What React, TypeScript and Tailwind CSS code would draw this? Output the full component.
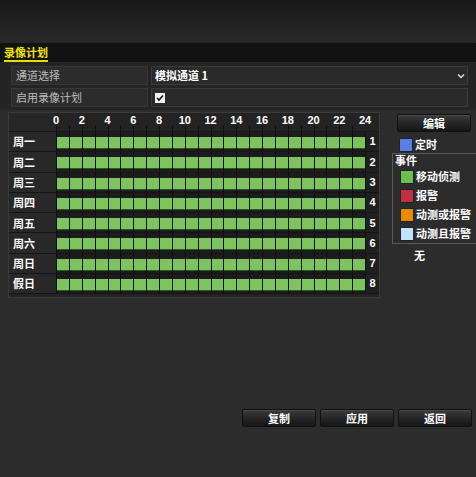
import React from "react";

const days = ["周一", "周二", "周三", "周四", "周五", "周六", "周日", "假日"];
const ticks = [0, 2, 4, 6, 8, 10, 12, 14, 16, 18, 20, 22, 24];
const hours = Array.from({ length: 24 }, (_, i) => i);

const font = { fontFamily: '"Noto Sans CJK SC", "Liberation Sans", sans-serif' };

function Btn({ label, className = "" }: { label: string; className?: string }) {
  return (
    <div
      className={
        "flex items-center justify-center h-[18px] rounded-[2px] border border-[#111] bg-gradient-to-b from-[#3c3c3c] via-[#262626] to-[#161616] text-white text-[11px] font-bold shadow-[inset_0_1px_0_#4a4a4a] " +
        className
      }
    >
      {label}
    </div>
  );
}

function Swatch({ color, label }: { color: string; label: string }) {
  return (
    <div className="flex items-center h-[19px] pl-[7px] gap-[2px]">
      <div className="w-[14px] h-[14px] border border-[#222]" style={{ background: color }} />
      <span className="text-white text-[11px] font-bold">{label}</span>
    </div>
  );
}

export default function App() {
  return (
    <div className="w-[476px] h-[477px] bg-[#2c2c2c] overflow-hidden relative" style={font}>
      <div className="h-[43px] bg-gradient-to-b from-[#191919] to-[#282828]" />
      <div className="h-[19px] bg-[#121212] flex items-end px-[4px]">
        <div className="text-[#f2e600] text-[11px] font-bold leading-[14px] border-b-2 border-[#e8dc00] pb-[1px]">
          录像计划
        </div>
      </div>
      <div className="bg-[#242424] px-[8px] pt-[4px] pb-[3px] flex flex-col gap-[3px] border-l-[3px] border-[#1e1e1e] -ml-[3px]">
        <div className="flex gap-[3px] h-[19px] pl-[3px]">
          <div className="w-[137px] bg-[#2c2c2c] border border-[#363636] flex items-center pl-[4px] text-[#bdbdbd] text-[11px]">
            通道选择
          </div>
          <div className="flex-1 bg-[#2a2a2a] border border-[#3a3a3a] flex items-center pl-[3px] pr-[2px] text-white text-[11px] font-bold">
            <span className="flex-1">模拟通道 1</span>
            <svg width="8" height="6" viewBox="0 0 8 6">
              <path d="M1 1.5 L4 4.5 L7 1.5" stroke="#ddd" strokeWidth="1.5" fill="none" />
            </svg>
          </div>
        </div>
        <div className="flex gap-[3px] h-[19px] pl-[3px]">
          <div className="w-[137px] bg-[#2c2c2c] border border-[#363636] flex items-center pl-[4px] text-[#bdbdbd] text-[11px]">
            启用录像计划
          </div>
          <div className="flex-1 bg-[#2a2a2a] border border-[#3a3a3a] flex items-center pl-[3px]">
            <div className="w-[10px] h-[10px] bg-[#f2f2f2] flex items-center justify-center">
              <svg width="8" height="8" viewBox="0 0 8 8">
                <path d="M1 4 L3 6 L7 1.5" stroke="#111" strokeWidth="1.6" fill="none" />
              </svg>
            </div>
          </div>
        </div>
      </div>

      <div className="flex mt-[2px] pl-[8px]">
        {/* schedule grid */}
        <div className="w-[372px] h-[186px] bg-[#232323] border border-[#3a3a3a] flex flex-col">
          <div className="h-[19px] flex border-b border-[#161616]">
            <div className="w-[47px] bg-[#262626]" />
            <div className="w-[309px] relative">
              {ticks.map((t) => (
                <span
                  key={t}
                  className="absolute top-[1px] -translate-x-1/2 text-white text-[11px] font-bold leading-[13px]"
                  style={{ left: `${(t / 24) * 100}%`, fontFamily: '"Liberation Sans", sans-serif' }}
                >
                  {t}
                </span>
              ))}
              <div className="absolute bottom-0 left-0 right-0 h-[5px] flex">
                {hours.map((h) => (
                  <div key={h} className="flex-1 border-l border-[#0e0e0e]" />
                ))}
              </div>
            </div>
            <div className="flex-1" />
          </div>
          {days.map((d, i) => (
            <div key={d} className="h-[20.3px] flex border-b border-[#151515]">
              <div className="w-[47px] bg-[#282828] flex items-center pl-[4px] text-white text-[11px] font-bold">
                {d}
              </div>
              <div className="w-[309px] flex bg-[#1c1c1c]">
                {hours.map((h) => (
                  <div key={h} className="flex-1 border-l border-[#0c0c0c] pt-[5px]">
                    <div className="h-[12px] bg-[#7dc45f] border-b border-[#2a5a1a]" />
                  </div>
                ))}
              </div>
              <div className="flex-1 flex items-center justify-center bg-[#202020] border-l border-[#111] text-white text-[11px] font-bold" style={{ fontFamily: '"Liberation Sans", sans-serif' }}>
                {i + 1}
              </div>
            </div>
          ))}
        </div>

        {/* legend */}
        <div className="flex-1 pl-[12px] pt-[2px] flex flex-col">
          <div className="pl-[5px]">
            <Btn label="编辑" className="w-[74px]" />
          </div>
          <div className="mt-[3px]">
            <Swatch color="#5b7ee6" label="定时" />
          </div>
          <div className="border border-[#5a5a5a] border-r-0 -mt-[1px]">
            <div className="text-white text-[11px] font-bold pl-[2px] h-[13px] leading-[13px]">事件</div>
            <Swatch color="#6cbf4e" label="移动侦测" />
            <Swatch color="#c1303e" label="报警" />
            <Swatch color="#ea8a00" label="动测或报警" />
            <Swatch color="#bfe3fb" label="动测且报警" />
          </div>
          <div className="pl-[22px] mt-[3px] text-white text-[11px] font-bold">无</div>
        </div>
      </div>

      <div className="flex justify-end gap-[4px] pr-[4px] mt-[111px]">
        <Btn label="复制" className="w-[74px]" />
        <Btn label="应用" className="w-[74px]" />
        <Btn label="返回" className="w-[74px]" />
      </div>
    </div>
  );
}
